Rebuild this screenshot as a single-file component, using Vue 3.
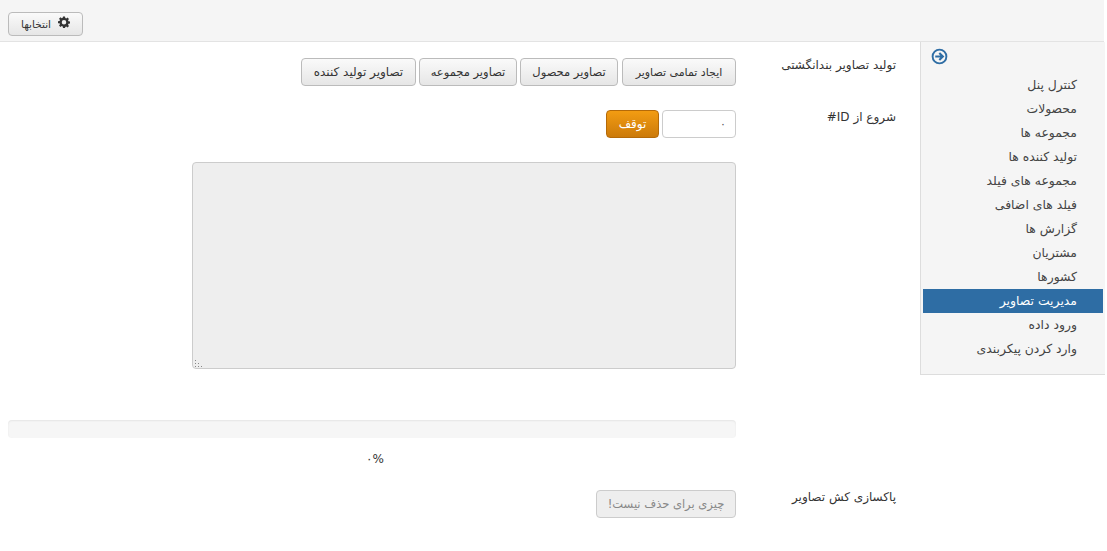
<template>
  <div class="page" dir="rtl">
    <header class="topbar">
      <button class="btn options" type="button">
        <svg class="gear" viewBox="0 0 24 24" width="12" height="12">
          <path fill="#333" fill-rule="evenodd" d="M10 1h4l.6 3.100 1.900.8 2.600-1.800 2.800 2.800-1.800 2.600.8 1.900 3.100.6v4l-3.100.6-.8 1.900 1.800 2.600-2.800 2.800-2.600-1.800-1.900.8L14 24h-4l-.6-3.100-1.900-.8-2.600 1.800-2.800-2.800 1.800-2.600-.8-1.900L0 14.500v-4l3.100-.6.8-1.900-1.800-2.600 2.800-2.800 2.600 1.800 1.900-.8zM12 8a4.500 4.500 0 1 0 0 9 4.500 4.500 0 0 0 0-9z" />
        </svg>
        <span class="options-text">انتخابها</span>
      </button>
    </header>

    <div class="body">
      <aside class="sidebar">
        <div class="toggle">
          <svg viewBox="0 0 18 18" width="17" height="17">
            <circle cx="9" cy="9" r="7.300" fill="none" stroke="#2e6da4" stroke-width="2" />
            <path d="M4.500 9h7.500M8.800 5.200 12.600 9l-3.800 3.800" fill="none" stroke="#2e6da4" stroke-width="2.200" />
          </svg>
        </div>
        <ul class="menu">
          <li v-for="item in menu" :key="item" :class="{ active: item === current }">{{ item }}</li>
        </ul>
      </aside>

      <main class="content">
        <section class="row">
          <label class="row-label">تولید تصاویر بندانگشتی</label>
          <div class="actions">
            <button v-for="b in thumbButtons" :key="b" class="btn" type="button">{{ b }}</button>
          </div>
        </section>

        <section class="row row-start">
          <label class="row-label">شروع از ID#</label>
          <div class="start-field">
            <input class="id-input" type="text" value="۰" />
            <button class="btn btn-stop" type="button">توقف</button>
          </div>
        </section>

        <section class="row row-log">
          <span class="row-label"></span>
          <div class="log-box">
            <svg class="grip" viewBox="0 0 8 8" width="8" height="8">
              <rect x="0" y="0" width="1" height="1" />
              <rect x="0" y="3" width="1" height="1" />
              <rect x="3" y="3" width="1" height="1" />
              <rect x="0" y="6" width="1" height="1" />
              <rect x="3" y="6" width="1" height="1" />
              <rect x="6" y="6" width="1" height="1" />
            </svg>
          </div>
        </section>

        <div class="progress"></div>
        <div class="percent" dir="ltr">۰%</div>

        <section class="row row-clear">
          <label class="row-label">پاکسازی کش تصاویر</label>
          <button class="btn btn-disabled" type="button" disabled>چیزی برای حذف نیست!</button>
        </section>
      </main>
    </div>
  </div>
</template>

<script setup>
const menu = [
  'کنترل پنل',
  'محصولات',
  'مجموعه ها',
  'تولید کننده ها',
  'مجموعه های فیلد',
  'فیلد های اضافی',
  'گزارش ها',
  'مشتریان',
  'کشورها',
  'مدیریت تصاویر',
  'ورود داده',
  'وارد کردن پیکربندی'
]
const current = 'مدیریت تصاویر'

const thumbButtons = ['ایجاد تمامی تصاویر', 'تصاویر محصول', 'تصاویر مجموعه', 'تصاویر تولید کننده']
</script>

<style>
html, body {
  margin: 0;
  background: #fff;
}
</style>

<style scoped>
.page {
  width: 1107px;
  height: 551px;
  overflow: hidden;
  font-family: "DejaVu Sans", sans-serif;
  font-size: 11px;
  color: #333;
}

.topbar {
  height: 42px;
  box-sizing: border-box;
  margin-right: 3px;
  background: #f5f5f5;
  border-bottom: 1px solid #e3e3e3;
  padding: 12px 0 0 8px;
  display: flex;
  justify-content: flex-end;
  align-items: flex-start;
}

.btn {
  height: 28px;
  box-sizing: border-box;
  padding: 0;
  border: 1px solid #bbb;
  border-radius: 4px;
  background: linear-gradient(#fafafa, #e6e6e6);
  font-family: inherit;
  font-size: 11.5px;
  color: #333;
  white-space: nowrap;
}

.options {
  width: 75px;
  height: 24px;
  display: flex;
  align-items: center;
  justify-content: center;
  gap: 7px;
  font-size: 10.5px;
}

.gear {
  margin-bottom: 4px;
}

.options-text {
  margin-bottom: 1px;
}

.body {
  display: flex;
  align-items: flex-start;
}

.sidebar {
  width: 185px;
  height: 333px;
  box-sizing: border-box;
  margin-right: 2px;
  background: #f5f5f5;
  border-left: 1px solid #ddd;
  border-bottom: 1px solid #ddd;
  flex: none;
}

.toggle {
  height: 31px;
  padding: 6px 0 0 10px;
  box-sizing: border-box;
  display: flex;
  justify-content: flex-end;
}

.menu {
  list-style: none;
  margin: 0;
  padding: 0;
}

.menu li {
  height: 24px;
  line-height: 24px;
  padding-right: 26px;
  margin: 0 2px;
  font-size: 12.4px;
  color: #444;
}

.menu li.active {
  background: #2e6da4;
  color: #fff;
}

.content {
  flex: 1;
  padding: 16px 24px 0 8px;
  min-width: 0;
}

.row {
  display: flex;
  align-items: flex-start;
}

.row-label {
  width: 160px;
  flex: none;
  font-size: 12px;
  line-height: 14px;
}

.actions {
  display: flex;
  gap: 3px;
}

.actions .btn:nth-child(1) {
  width: 114px;
  margin-left: 1px;
  font-size: 11px;
}

.actions .btn:nth-child(2),
.actions .btn:nth-child(3) {
  width: 98px;
}

.actions .btn:nth-child(4) {
  width: 115px;
  font-size: 12px;
}

.row-start {
  margin-top: 24px;
}

.start-field {
  display: flex;
  gap: 3px;
}

.id-input {
  width: 74px;
  height: 28px;
  box-sizing: border-box;
  border: 1px solid #ccc;
  border-radius: 4px;
  padding: 0 9px;
  font-family: inherit;
  font-size: 11px;
  color: #555;
  background: #fff;
  outline: none;
}

.btn-stop {
  width: 53px;
  border: 1px solid #b56a08;
  background: linear-gradient(#f39c12, #cc7a0a);
  color: #fff;
  font-size: 12px;
}

.row-log {
  margin-top: 24px;
}

.log-box {
  position: relative;
  width: 544px;
  height: 207px;
  box-sizing: border-box;
  background: #eee;
  border: 1px solid #ccc;
  border-radius: 4px;
}

.grip {
  position: absolute;
  left: 2px;
  bottom: 0;
  fill: #888;
}

.progress {
  margin-top: 51px;
  margin-right: 160px;
  height: 18px;
  background: #f6f6f6;
  border-radius: 4px;
  box-shadow: inset 0 1px 2px rgba(0, 0, 0, 0.07);
}

.percent {
  margin-top: 13px;
  text-align: center;
  margin-right: 154px;
  font-size: 12px;
  line-height: 16px;
}

.row-clear {
  margin-top: 23px;
}

.btn-disabled {
  width: 140px;
  background: #eee;
  border-color: #ccc;
  color: #888;
}
</style>
